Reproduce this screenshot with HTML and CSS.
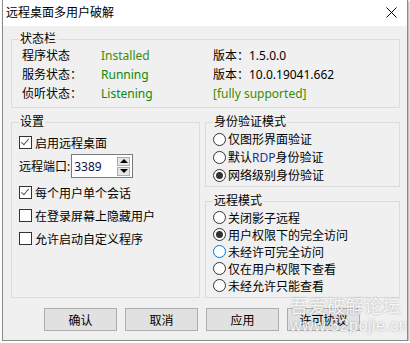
FILE: index.html
```html
<!DOCTYPE html>
<html>
<head>
<meta charset="utf-8">
<link rel="stylesheet" href="styles.css">
</head>
<body>

<div class="window">
  <div class="titlebar">
    <span class="title">远程桌面多用户破解</span>
    <svg class="close" width="11" height="11" viewBox="0 0 11 11">
      <path d="M0.5 0.5 L10.5 10.5 M10.5 0.5 L0.5 10.5" stroke="#000" stroke-width="1" fill="none"/>
    </svg>
  </div>

  <div class="content">
    <fieldset class="group status">
      <legend>状态栏</legend>
      <div class="status-grid">
        <span>程序状态</span><span class="olive">Installed</span><span>版本：1.5.0.0</span>
        <span>服务状态：</span><span class="green">Running</span><span>版本：10.0.19041.662</span>
        <span>侦听状态：</span><span class="green">Listening</span><span class="olive">[fully supported]</span>
      </div>
    </fieldset>

    <div class="columns">
      <fieldset class="group settings">
        <legend>设置</legend>
        <div class="check"><span class="box on"></span>启用远程桌面</div>
        <div class="port">
          <span>远程端口:</span>
          <span class="spin">
            <span class="spin-value">3389</span>
            <span class="spin-btns">
              <span class="spin-btn"><span class="tri-up"></span></span>
              <span class="spin-btn"><span class="tri-down"></span></span>
            </span>
          </span>
        </div>
        <div class="check"><span class="box on"></span>每个用户单个会话</div>
        <div class="check"><span class="box"></span>在登录屏幕上隐藏用户</div>
        <div class="check"><span class="box"></span>允许启动自定义程序</div>
      </fieldset>

      <div class="right">
        <fieldset class="group auth">
          <legend>身份验证模式</legend>
          <div class="radio"><span class="dot"></span>仅图形界面验证</div>
          <div class="radio"><span class="dot"></span>默认<span class="rdp">RDP</span>身份验证</div>
          <div class="radio"><span class="dot on"></span>网络级别身份验证</div>
        </fieldset>

        <fieldset class="group mode">
          <legend>远程模式</legend>
          <div class="radio"><span class="dot"></span>关闭影子远程</div>
          <div class="radio"><span class="dot on"></span>用户权限下的完全访问</div>
          <div class="radio"><span class="dot hover"></span>未经许可完全访问</div>
          <div class="radio"><span class="dot"></span>仅在用户权限下查看</div>
          <div class="radio"><span class="dot"></span>未经允许只能查看</div>
        </fieldset>
      </div>
    </div>

    <div class="buttons">
      <button type="button">确认</button>
      <button type="button">取消</button>
      <button type="button">应用</button>
      <button type="button">许可协议</button>
    </div>
  </div>

  <!-- forum watermark over the corner -->
  <div class="watermark">
    <div class="wm-name">吾爱破解论坛</div>
    <div class="wm-url">www.52pojie.cn</div>
  </div>
</div>

</body>
</html>
```

FILE: styles.css
```css
body {
  margin: 0;
  background: #fff;
  font-family: "Noto Sans", "Noto Sans CJK SC", sans-serif;
  font-size: 12px;
  color: #000;
}

.window {
  position: relative;
  margin-left: 2px;
  width: 404px;
  height: 340px;
  background: #f0f0f0;
  border: 1px solid #8a8a8a;
  border-top: none;
  box-shadow: 1px 1px 2px rgba(0, 0, 0, 0.35);
  overflow: hidden;
}

.titlebar {
  height: 26px;
  background: #fff;
  display: flex;
  align-items: center;
  justify-content: space-between;
  padding: 0 10px 0 3px;
}

.title {
  line-height: 26px;
}

.close {
  display: block;
  margin-top: -1px;
}

.content {
  padding: 6px 7px 0 8px;
}

/* group boxes */
.group {
  margin: 0;
  border: 1px solid #dcdcdc;
  padding: 0 7px 0 7px;
  min-width: 0;
}

.group legend {
  padding: 0 1px;
  line-height: 14px;
}

.status {
  padding-bottom: 4px;
}

.status-grid {
  display: grid;
  grid-template-columns: 79px 112px auto;
  line-height: 19px;
  margin-left: 3px;
}

.green { color: #0a8a0a; }
.olive { color: #3c8c00; }

.columns {
  display: grid;
  grid-template-columns: 189px 1fr;
  column-gap: 5px;
  margin-top: 7px;
}

.settings {
  padding-top: 2px;
}

.right {
  display: flex;
  flex-direction: column;
}

.auth {
  padding-top: 1px;
  padding-bottom: 2px;
}

.mode {
  margin-top: 7px;
  padding-top: 1px;
  padding-bottom: 3px;
}

/* checkbox rows */
.check {
  display: flex;
  align-items: center;
  height: 23px;
}

.box {
  width: 11px;
  height: 11px;
  border: 1px solid #333;
  background: #fff;
  margin-right: 3px;
  flex: none;
  position: relative;
}

.box.on::after {
  content: "";
  position: absolute;
  left: 3px;
  top: 0px;
  width: 3px;
  height: 7px;
  border: solid #555;
  border-width: 0 1px 1px 0;
  transform: rotate(40deg);
}

.port {
  display: flex;
  align-items: center;
  height: 24px;
  margin-bottom: 3px;
}

.spin {
  display: flex;
  align-items: center;
  justify-content: space-between;
  width: 60px;
  height: 22px;
  border: 1px solid #7a7a7a;
  background: #fff;
  margin-left: 1px;
}

.spin-value {
  padding-left: 2px;
  color: #101040;
}

.spin-btns {
  display: flex;
  flex-direction: column;
  gap: 1px;
  margin-right: 2px;
}

.spin-btn {
  width: 11px;
  height: 7px;
  border: 1px solid #adadad;
  background: #e5e5e5;
  display: flex;
  align-items: center;
  justify-content: center;
}

.tri-up, .tri-down {
  width: 0;
  height: 0;
  border-left: 4px solid transparent;
  border-right: 4px solid transparent;
}

.tri-up { border-bottom: 4px solid #000; }
.tri-down { border-top: 4px solid #000; }

/* radio rows */
.radio {
  display: flex;
  align-items: center;
  height: 18px;
}

.mode .radio {
  height: 17px;
}

.dot {
  width: 11px;
  height: 11px;
  border: 1px solid #333;
  border-radius: 50%;
  background: #fff;
  margin-right: 2px;
  flex: none;
  position: relative;
}

.dot.on::after {
  content: "";
  position: absolute;
  left: 2px;
  top: 2px;
  width: 7px;
  height: 7px;
  border-radius: 50%;
  background: #333;
}

.dot.hover {
  border-color: #0078d7;
}

.rdp {
  color: #1a2fa0;
}

/* bottom buttons */
.buttons {
  display: flex;
  gap: 8px;
  margin: 10px 0 0 33px;
}

button {
  width: 73px;
  height: 23px;
  padding: 0;
  border: 1px solid #adadad;
  background: #e1e1e1;
  font-family: inherit;
  font-size: 12px;
  color: #000;
}

.watermark {
  position: absolute;
  left: 287px;
  top: 295px;
  color: rgba(255, 255, 255, 0.9);
  text-shadow: 0 0 2px rgba(60, 60, 60, 0.45);
  pointer-events: none;
}

.wm-name {
  font-family: "Noto Sans CJK SC", sans-serif;
  font-size: 18px;
  line-height: 20px;
  letter-spacing: 0.5px;
}

.wm-url {
  font-family: "Liberation Sans", sans-serif;
  font-size: 16px;
  line-height: 22px;
  letter-spacing: 0.5px;
}
```
